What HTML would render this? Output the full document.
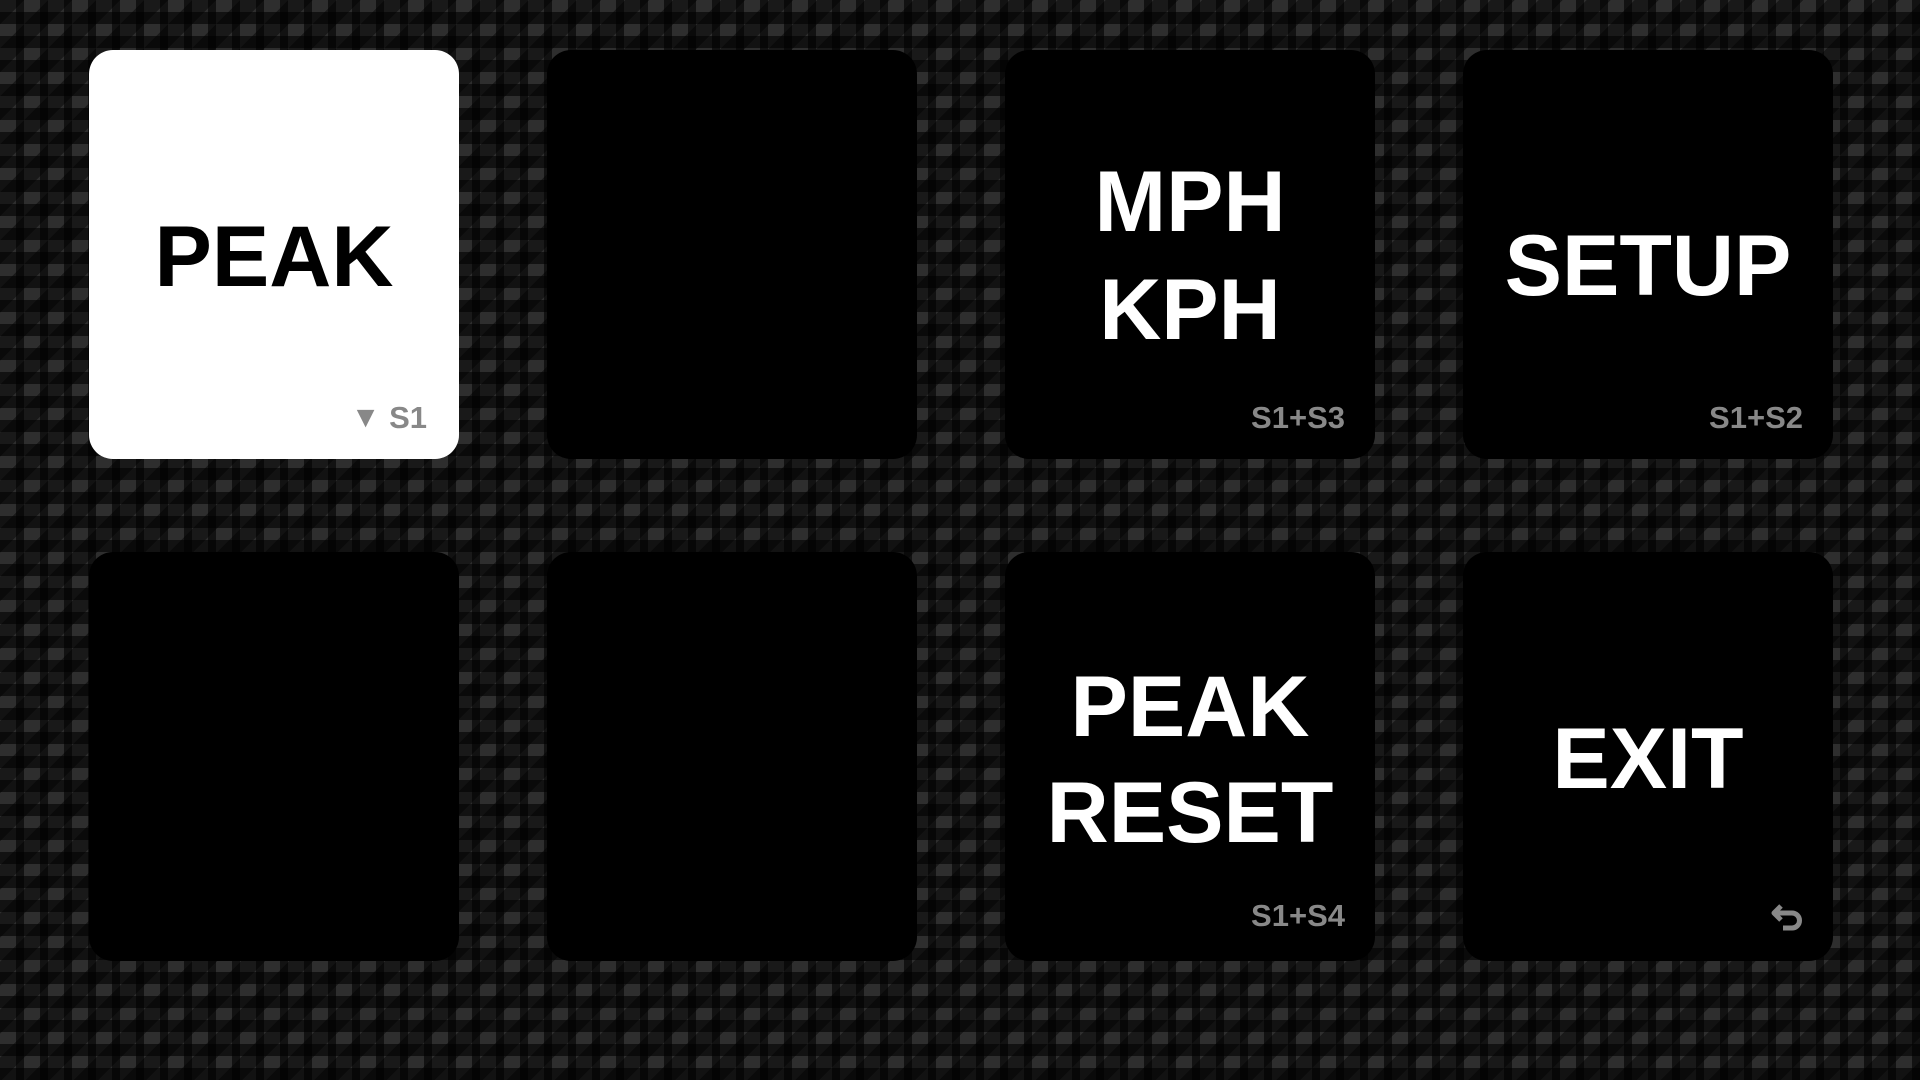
<!DOCTYPE html>
<html><head><meta charset="utf-8"><style>
html,body{margin:0;padding:0;}
body{width:1920px;height:1080px;overflow:hidden;position:relative;
background-color:#0e0e0e;
background-image:
 repeating-linear-gradient(0deg, rgba(0,0,0,0.6) 0 12px, rgba(0,0,0,0) 12px 24px),
 repeating-linear-gradient(90deg, #2e2e2e 0 16px, #121212 16px 24px);
background-size:48px 48px,48px 48px;
font-family:"Liberation Sans",sans-serif;}
.bg2{position:absolute;inset:0;background-image:repeating-linear-gradient(135deg, rgba(0,0,0,0.45) 0 17px, rgba(0,0,0,0) 17px 34px);}
.t{position:absolute;width:370px;height:409px;background:#000;border-radius:24px;color:#fff;}
.w{background:#fff;color:#000;}
.txt{position:absolute;left:0;right:0;text-align:center;font-weight:bold;font-size:86px;line-height:108px;}
.lab{position:absolute;right:30px;top:350px;font-weight:bold;font-size:31px;color:#888;}
</style></head><body>
<div class="bg2"></div>
<div class="t w" style="left:89px;top:50px"><div class="txt" style="top:153px">PEAK</div><div class="lab" style="right:32px"><span style="font-size:30px;position:relative;top:-1px">▼</span> S1</div></div>
<div class="t" style="left:547px;top:50px"></div>
<div class="t" style="left:1005px;top:50px"><div class="txt" style="top:98px">MPH</div><div class="txt" style="top:206px">KPH</div><div class="lab">S1+S3</div></div>
<div class="t" style="left:1463px;top:50px"><div class="txt" style="top:162px">SETUP</div><div class="lab">S1+S2</div></div>
<div class="t" style="left:89px;top:552px"></div>
<div class="t" style="left:547px;top:552px"></div>
<div class="t" style="left:1005px;top:552px"><div class="txt" style="top:101px">PEAK</div><div class="txt" style="top:207px">RESET</div><div class="lab" style="top:346px">S1+S4</div></div>
<div class="t" style="left:1463px;top:552px"><div class="txt" style="top:153px">EXIT</div>
<svg style="position:absolute;left:308px;top:350px" width="34" height="34" viewBox="0 0 34 34"><path d="M10 4 L3 11 L10 18 M3 11 H21 A7.5 7.5 0 0 1 21 26 H12" fill="none" stroke="#888" stroke-width="5" stroke-linejoin="round"/></svg></div>
</body></html>
